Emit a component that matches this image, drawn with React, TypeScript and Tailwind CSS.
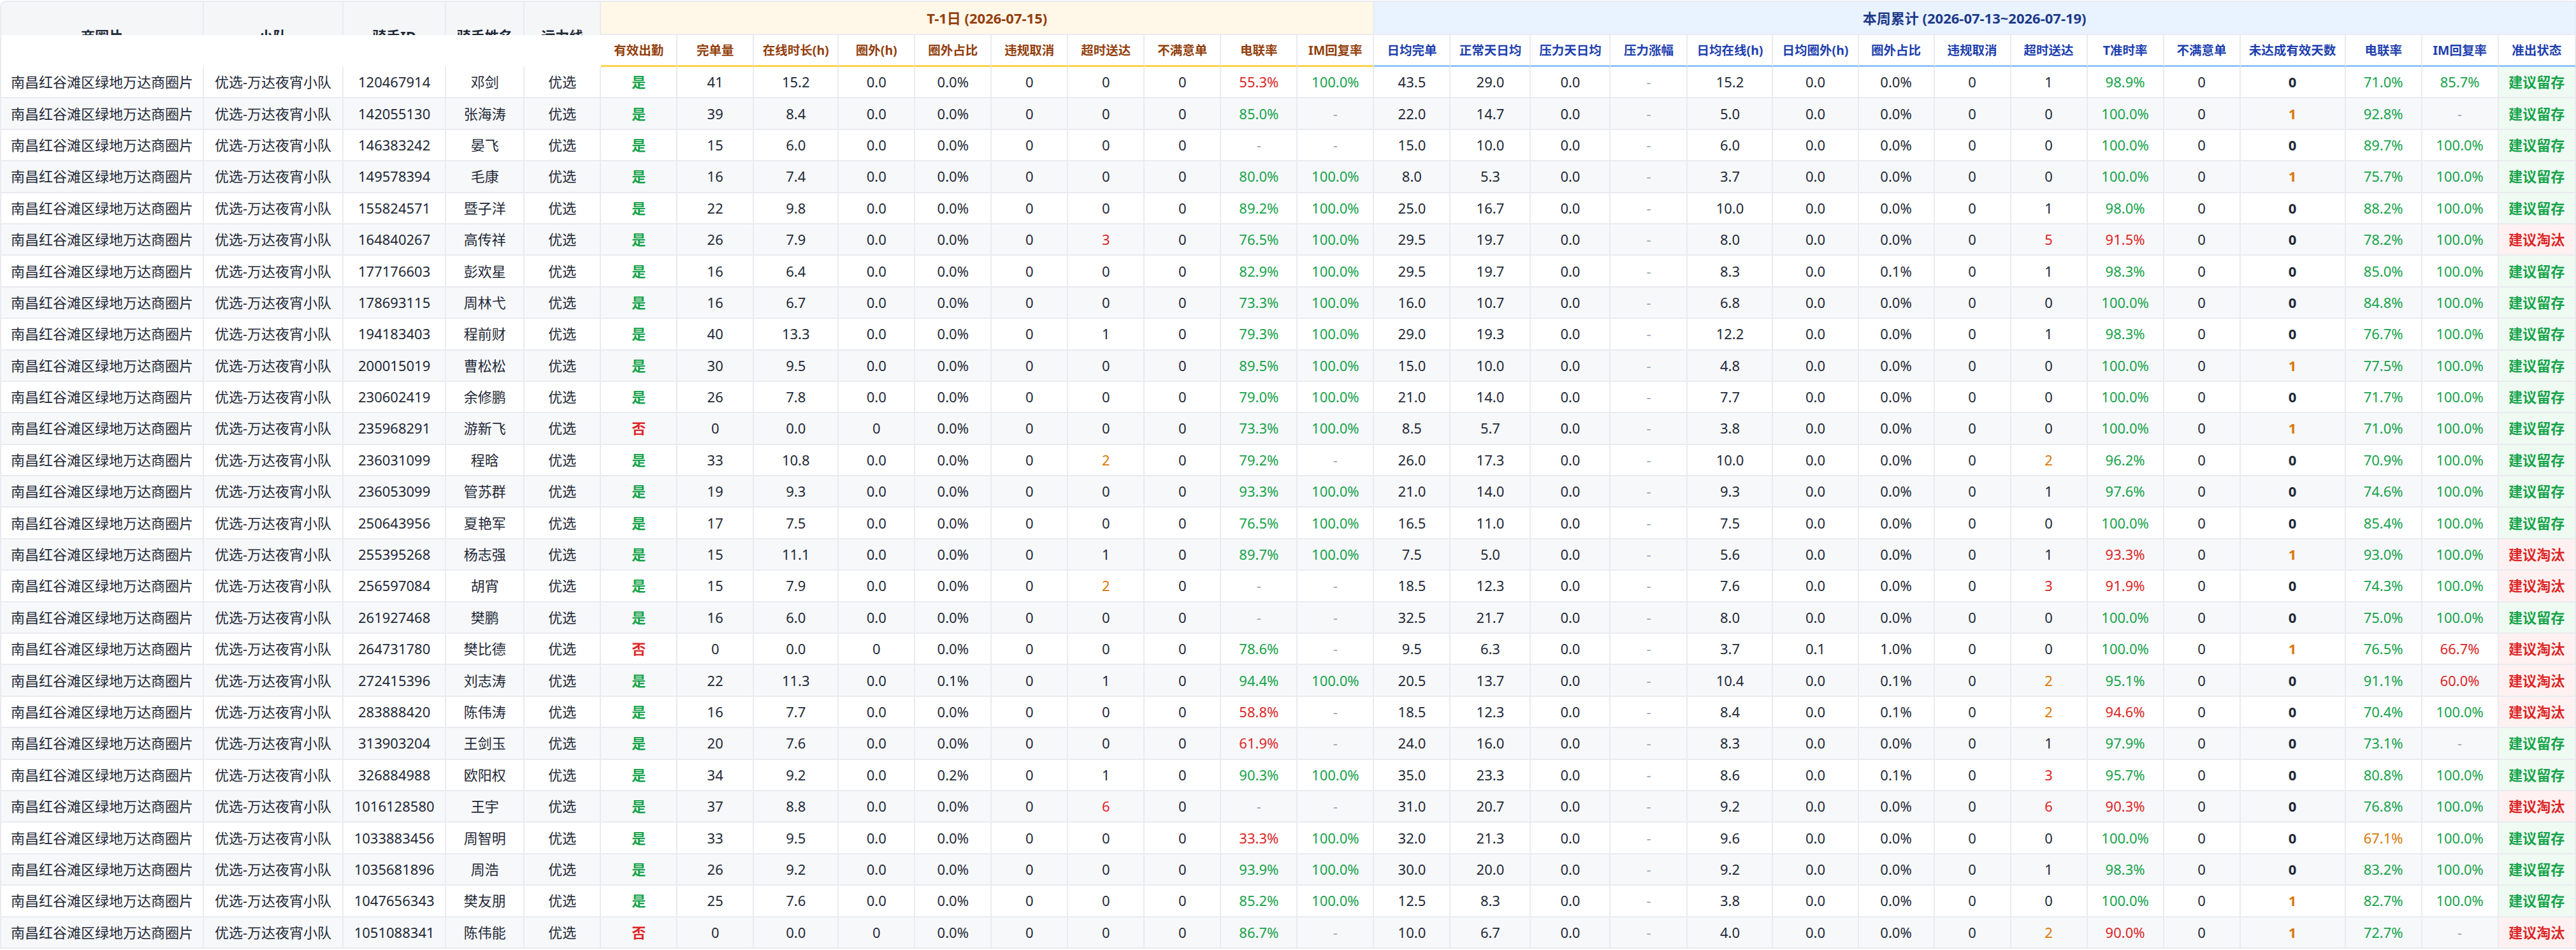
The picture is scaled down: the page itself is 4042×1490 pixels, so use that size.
import React from "react";

type Tone = "plain" | "attend" | "late" | "callDay" | "callWeek" | "im" | "imWeek" | "ontime" | "missed" | "status";

interface Col {
  label: string;
  w: string;
  tone: Tone;
}

const LEFT_COLS = [
  { label: "商圈片", w: "w-[318px]" },
  { label: "小队", w: "w-[219px]" },
  { label: "骑手ID", w: "w-[161px]" },
  { label: "骑手姓名", w: "w-[123px]" },
  { label: "运力线", w: "w-[120px]" },
];

const DAY_COLS: Col[] = [
  { label: "有效出勤", w: "w-[120px]", tone: "attend" },
  { label: "完单量", w: "w-[120px]", tone: "plain" },
  { label: "在线时长(h)", w: "w-[133px]", tone: "plain" },
  { label: "圈外(h)", w: "w-[120px]", tone: "plain" },
  { label: "圈外占比", w: "w-[120px]", tone: "plain" },
  { label: "违规取消", w: "w-[120px]", tone: "plain" },
  { label: "超时送达", w: "w-[120px]", tone: "late" },
  { label: "不满意单", w: "w-[120px]", tone: "plain" },
  { label: "电联率", w: "w-[120px]", tone: "callDay" },
  { label: "IM回复率", w: "w-[120px]", tone: "im" },
];

const WEEK_COLS: Col[] = [
  { label: "日均完单", w: "w-[120px]", tone: "plain" },
  { label: "正常天日均", w: "w-[126px]", tone: "plain" },
  { label: "压力天日均", w: "w-[125px]", tone: "plain" },
  { label: "压力涨幅", w: "w-[121px]", tone: "plain" },
  { label: "日均在线(h)", w: "w-[134px]", tone: "plain" },
  { label: "日均圈外(h)", w: "w-[134px]", tone: "plain" },
  { label: "圈外占比", w: "w-[119px]", tone: "plain" },
  { label: "违规取消", w: "w-[120px]", tone: "plain" },
  { label: "超时送达", w: "w-[120px]", tone: "late" },
  { label: "T准时率", w: "w-[120px]", tone: "ontime" },
  { label: "不满意单", w: "w-[120px]", tone: "plain" },
  { label: "未达成有效天数", w: "w-[165px]", tone: "missed" },
  { label: "电联率", w: "w-[120px]", tone: "callWeek" },
  { label: "IM回复率", w: "w-[120px]", tone: "imWeek" },
  { label: "准出状态", w: "w-[121px]", tone: "status" },
];

// id name | T-1 (10) | week (15, last is status)
const ROWS = [
  "120467914 邓剑 是 41 15.2 0.0 0.0% 0 0 0 55.3% 100.0% 43.5 29.0 0.0 - 15.2 0.0 0.0% 0 1 98.9% 0 0 71.0% 85.7% 留存",
  "142055130 张海涛 是 39 8.4 0.0 0.0% 0 0 0 85.0% - 22.0 14.7 0.0 - 5.0 0.0 0.0% 0 0 100.0% 0 1 92.8% - 留存",
  "146383242 晏飞 是 15 6.0 0.0 0.0% 0 0 0 - - 15.0 10.0 0.0 - 6.0 0.0 0.0% 0 0 100.0% 0 0 89.7% 100.0% 留存",
  "149578394 毛康 是 16 7.4 0.0 0.0% 0 0 0 80.0% 100.0% 8.0 5.3 0.0 - 3.7 0.0 0.0% 0 0 100.0% 0 1 75.7% 100.0% 留存",
  "155824571 暨子洋 是 22 9.8 0.0 0.0% 0 0 0 89.2% 100.0% 25.0 16.7 0.0 - 10.0 0.0 0.0% 0 1 98.0% 0 0 88.2% 100.0% 留存",
  "164840267 高传祥 是 26 7.9 0.0 0.0% 0 3 0 76.5% 100.0% 29.5 19.7 0.0 - 8.0 0.0 0.0% 0 5 91.5% 0 0 78.2% 100.0% 淘汰",
  "177176603 彭欢星 是 16 6.4 0.0 0.0% 0 0 0 82.9% 100.0% 29.5 19.7 0.0 - 8.3 0.0 0.1% 0 1 98.3% 0 0 85.0% 100.0% 留存",
  "178693115 周林弋 是 16 6.7 0.0 0.0% 0 0 0 73.3% 100.0% 16.0 10.7 0.0 - 6.8 0.0 0.0% 0 0 100.0% 0 0 84.8% 100.0% 留存",
  "194183403 程前财 是 40 13.3 0.0 0.0% 0 1 0 79.3% 100.0% 29.0 19.3 0.0 - 12.2 0.0 0.0% 0 1 98.3% 0 0 76.7% 100.0% 留存",
  "200015019 曹松松 是 30 9.5 0.0 0.0% 0 0 0 89.5% 100.0% 15.0 10.0 0.0 - 4.8 0.0 0.0% 0 0 100.0% 0 1 77.5% 100.0% 留存",
  "230602419 余修鹏 是 26 7.8 0.0 0.0% 0 0 0 79.0% 100.0% 21.0 14.0 0.0 - 7.7 0.0 0.0% 0 0 100.0% 0 0 71.7% 100.0% 留存",
  "235968291 游新飞 否 0 0.0 0 0.0% 0 0 0 73.3% 100.0% 8.5 5.7 0.0 - 3.8 0.0 0.0% 0 0 100.0% 0 1 71.0% 100.0% 留存",
  "236031099 程晗 是 33 10.8 0.0 0.0% 0 2 0 79.2% - 26.0 17.3 0.0 - 10.0 0.0 0.0% 0 2 96.2% 0 0 70.9% 100.0% 留存",
  "236053099 管苏群 是 19 9.3 0.0 0.0% 0 0 0 93.3% 100.0% 21.0 14.0 0.0 - 9.3 0.0 0.0% 0 1 97.6% 0 0 74.6% 100.0% 留存",
  "250643956 夏艳军 是 17 7.5 0.0 0.0% 0 0 0 76.5% 100.0% 16.5 11.0 0.0 - 7.5 0.0 0.0% 0 0 100.0% 0 0 85.4% 100.0% 留存",
  "255395268 杨志强 是 15 11.1 0.0 0.0% 0 1 0 89.7% 100.0% 7.5 5.0 0.0 - 5.6 0.0 0.0% 0 1 93.3% 0 1 93.0% 100.0% 淘汰",
  "256597084 胡宵 是 15 7.9 0.0 0.0% 0 2 0 - - 18.5 12.3 0.0 - 7.6 0.0 0.0% 0 3 91.9% 0 0 74.3% 100.0% 淘汰",
  "261927468 樊鹏 是 16 6.0 0.0 0.0% 0 0 0 - - 32.5 21.7 0.0 - 8.0 0.0 0.0% 0 0 100.0% 0 0 75.0% 100.0% 留存",
  "264731780 樊比德 否 0 0.0 0 0.0% 0 0 0 78.6% - 9.5 6.3 0.0 - 3.7 0.1 1.0% 0 0 100.0% 0 1 76.5% 66.7% 淘汰",
  "272415396 刘志涛 是 22 11.3 0.0 0.1% 0 1 0 94.4% 100.0% 20.5 13.7 0.0 - 10.4 0.0 0.1% 0 2 95.1% 0 0 91.1% 60.0% 淘汰",
  "283888420 陈伟涛 是 16 7.7 0.0 0.0% 0 0 0 58.8% - 18.5 12.3 0.0 - 8.4 0.0 0.1% 0 2 94.6% 0 0 70.4% 100.0% 淘汰",
  "313903204 王剑玉 是 20 7.6 0.0 0.0% 0 0 0 61.9% - 24.0 16.0 0.0 - 8.3 0.0 0.0% 0 1 97.9% 0 0 73.1% - 留存",
  "326884988 欧阳权 是 34 9.2 0.0 0.2% 0 1 0 90.3% 100.0% 35.0 23.3 0.0 - 8.6 0.0 0.1% 0 3 95.7% 0 0 80.8% 100.0% 留存",
  "1016128580 王宇 是 37 8.8 0.0 0.0% 0 6 0 - - 31.0 20.7 0.0 - 9.2 0.0 0.0% 0 6 90.3% 0 0 76.8% 100.0% 淘汰",
  "1033883456 周智明 是 33 9.5 0.0 0.0% 0 0 0 33.3% 100.0% 32.0 21.3 0.0 - 9.6 0.0 0.0% 0 0 100.0% 0 0 67.1% 100.0% 留存",
  "1035681896 周浩 是 26 9.2 0.0 0.0% 0 0 0 93.9% 100.0% 30.0 20.0 0.0 - 9.2 0.0 0.0% 0 1 98.3% 0 0 83.2% 100.0% 留存",
  "1047656343 樊友朋 是 25 7.6 0.0 0.0% 0 0 0 85.2% 100.0% 12.5 8.3 0.0 - 3.8 0.0 0.0% 0 0 100.0% 0 1 82.7% 100.0% 留存",
  "1051088341 陈伟能 否 0 0.0 0 0.0% 0 0 0 86.7% - 10.0 6.7 0.0 - 4.0 0.0 0.0% 0 2 90.0% 0 1 72.7% - 淘汰",
].map((line) => line.split(" "));

const CELL = "border-r-2 border-b-2 border-[#e9ebef] text-center whitespace-nowrap px-2";

function toneClass(tone: Tone, v: string): string {
  if (v === "-") return "text-[#9ca3af]";
  const n = parseFloat(v);
  switch (tone) {
    case "attend":
      return v === "是" ? "text-[#16a34a] font-bold" : "text-[#dc2626] font-bold";
    case "late":
      return n >= 3 ? "text-[#dc2626]" : n === 2 ? "text-[#d97706]" : "text-[#1f2937]";
    case "callDay":
      return n < 70 ? "text-[#dc2626]" : "text-[#16a34a]";
    case "callWeek":
      return n < 70 ? "text-[#d97706]" : "text-[#16a34a]";
    case "im":
      return "text-[#16a34a]";
    case "imWeek":
      return n < 80 ? "text-[#dc2626]" : "text-[#16a34a]";
    case "ontime":
      return n < 95 ? "text-[#dc2626]" : "text-[#16a34a]";
    case "missed":
      return n > 0 ? "text-[#d97706] font-bold" : "text-[#1f2937] font-bold";
    default:
      return "text-[#1f2937]";
  }
}

function ValueCell({ col, v }: { col: Col; v: string }) {
  if (col.tone === "status") {
    const keep = v === "留存";
    return (
      <td className={`${CELL} font-bold ${keep ? "bg-[#effaf2] text-[#16a34a]" : "bg-[#fff1f1] text-[#dc2626]"}`}>
        {keep ? "建议留存" : "建议淘汰"}
      </td>
    );
  }
  return <td className={`${CELL} ${toneClass(col.tone, v)}`}>{v}</td>;
}

export default function App() {
  return (
    <div className="min-h-screen bg-white font-['Noto_Sans','Noto_Sans_CJK_SC',sans-serif] text-[22px]">
      <div className="w-[4042px] overflow-hidden rounded-tl-[10px] border-l-2 border-t-2 border-[#e9ebef] mt-[1px]">
        <table className="table-fixed border-separate border-spacing-0 w-[4040px]">
          <colgroup>
            {LEFT_COLS.map((c) => <col key={c.label} className={c.w} />)}
            {DAY_COLS.map((c) => <col key={"d" + c.label} className={c.w} />)}
            {WEEK_COLS.map((c) => <col key={"w" + c.label} className={c.w} />)}
          </colgroup>
          <thead>
            {/* group header row */}
            <tr className="h-[52px]">
              {LEFT_COLS.map((c) => (
                <th key={c.label} className="bg-[#f5f6f8] border-r-2 border-[#e9ebef] p-0 align-top">
                  <div className="h-[52px] overflow-hidden pt-[38px] text-[22px] leading-[30px] font-bold text-[#1f2937]">
                    {c.label}
                  </div>
                </th>
              ))}
              <th colSpan={10} className="bg-[#fff7e8] text-[#92400e] font-bold text-[22px] border-r-2 border-b-2 border-[#e9ebef]">
                T-1日 (2026-07-15)
              </th>
              <th colSpan={15} className="bg-[#e8f3ff] text-[#1e3a8a] font-bold text-[22px] border-r-2 border-b-2 border-[#e9ebef]">
                本周累计 (2026-07-13~2026-07-19)
              </th>
            </tr>
            {/* metric header row */}
            <tr className="h-[50px]">
              <th colSpan={5} className="bg-white" />
              {DAY_COLS.map((c) => (
                <th
                  key={c.label}
                  className="bg-white border-r-2 border-b-[3px] border-r-[#e9ebef] border-b-[#fcd34d] text-[#92400e] font-bold text-[19.5px] whitespace-nowrap px-1"
                >
                  {c.label}
                </th>
              ))}
              {WEEK_COLS.map((c) => (
                <th
                  key={c.label}
                  className="bg-white border-r-2 border-b-[3px] border-r-[#e9ebef] border-b-[#93c5fd] text-[#1e40af] font-bold text-[19.5px] whitespace-nowrap px-1"
                >
                  {c.label}
                </th>
              ))}
            </tr>
          </thead>
          <tbody>
            {ROWS.map((r, i) => {
              const [id, name] = r;
              const day = r.slice(2, 12);
              const week = r.slice(12, 27);
              return (
                <tr key={id} className={`h-[49.4px] ${i % 2 === 1 ? "bg-[#f7f8fa]" : "bg-white"}`}>
                  <td className={`${CELL} text-[#1f2937]`}>南昌红谷滩区绿地万达商圈片</td>
                  <td className={`${CELL} text-[#1f2937]`}>优选-万达夜宵小队</td>
                  <td className={`${CELL} text-[#1f2937]`}>{id}</td>
                  <td className={`${CELL} text-[#1f2937]`}>{name}</td>
                  <td className={`${CELL} text-[#1f2937]`}>优选</td>
                  {day.map((v, j) => <ValueCell key={"d" + j} col={DAY_COLS[j]} v={v} />)}
                  {week.map((v, j) => <ValueCell key={"w" + j} col={WEEK_COLS[j]} v={v} />)}
                </tr>
              );
            })}
          </tbody>
        </table>
      </div>
    </div>
  );
}
